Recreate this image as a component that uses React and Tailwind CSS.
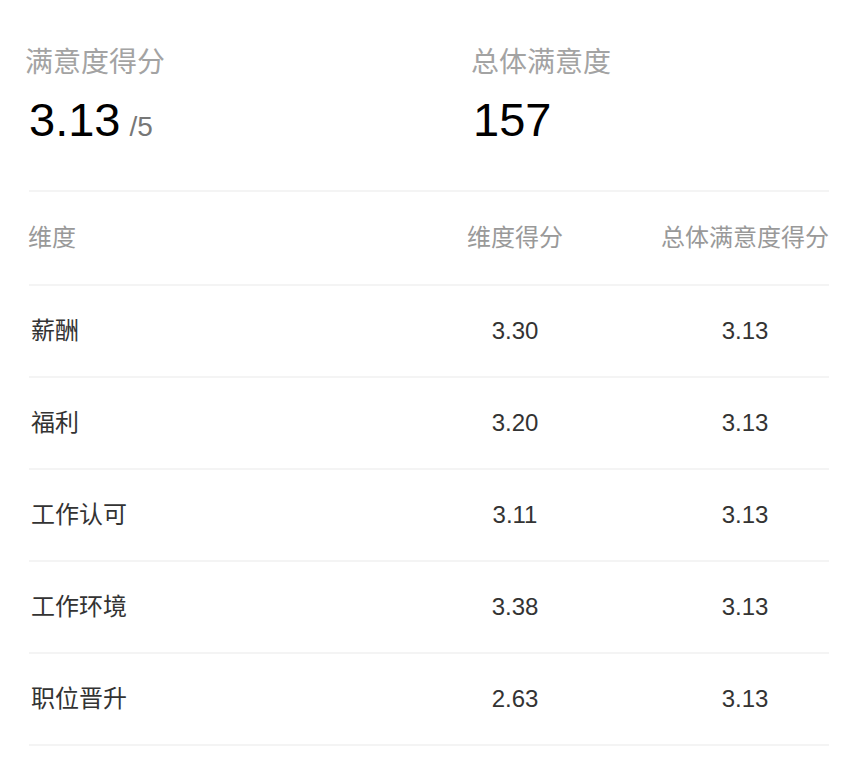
import React from "react";

const ROWS = [
  { name: "薪酬", score: "3.30", total: "3.13" },
  { name: "福利", score: "3.20", total: "3.13" },
  { name: "工作认可", score: "3.11", total: "3.13" },
  { name: "工作环境", score: "3.38", total: "3.13" },
  { name: "职位晋升", score: "2.63", total: "3.13" },
];

const FONT = "font-['Liberation_Sans','Noto_Sans_CJK_SC',sans-serif]";

export default function App() {
  return (
    <div className={`min-h-[780px] bg-white ${FONT}`}>
      <div className="ml-[29px] w-[800px] pt-[43px]">
        {/* Summary */}
        <div className="grid grid-cols-[444px_1fr] pb-[40px] border-b-2 border-[#f4f4f4]">
          <div>
            <div className="text-[28px] leading-[40px] text-[#a3a3a3] -ml-[4px]">满意度得分</div>
            <div className="mt-[7px] h-[60px] flex items-baseline">
              <span className="text-[47px] leading-[60px] text-black">3.13</span>
              <span className="ml-[9px] text-[28px] text-[#777]">/5</span>
            </div>
          </div>
          <div>
            <div className="text-[28px] leading-[40px] text-[#a3a3a3] -ml-[2px]">总体满意度</div>
            <div className="mt-[7px] h-[60px] text-[47px] leading-[60px] text-black">157</div>
          </div>
        </div>

        {/* Table header */}
        <div className="grid grid-cols-[400px_172px_228px] h-[94px] items-center border-b-2 border-[#f4f4f4] text-[24px] text-[#999]">
          <div className="-ml-[1px]">维度</div>
          <div className="text-center">维度得分</div>
          <div className="flex justify-end">
            <div className="w-[168px] text-center">总体满意度得分</div>
          </div>
        </div>

        {/* Rows */}
        {ROWS.map((r) => (
          <div
            key={r.name}
            className="grid grid-cols-[400px_172px_228px] h-[92px] items-center border-b-2 border-[#f4f4f4] text-[#333]"
          >
            <div className="text-[24px] pl-[2px]">{r.name}</div>
            <div className="text-center text-[24px]">{r.score}</div>
            <div className="flex justify-end">
              <div className="w-[168px] text-center text-[24px]">{r.total}</div>
            </div>
          </div>
        ))}
      </div>
    </div>
  );
}
